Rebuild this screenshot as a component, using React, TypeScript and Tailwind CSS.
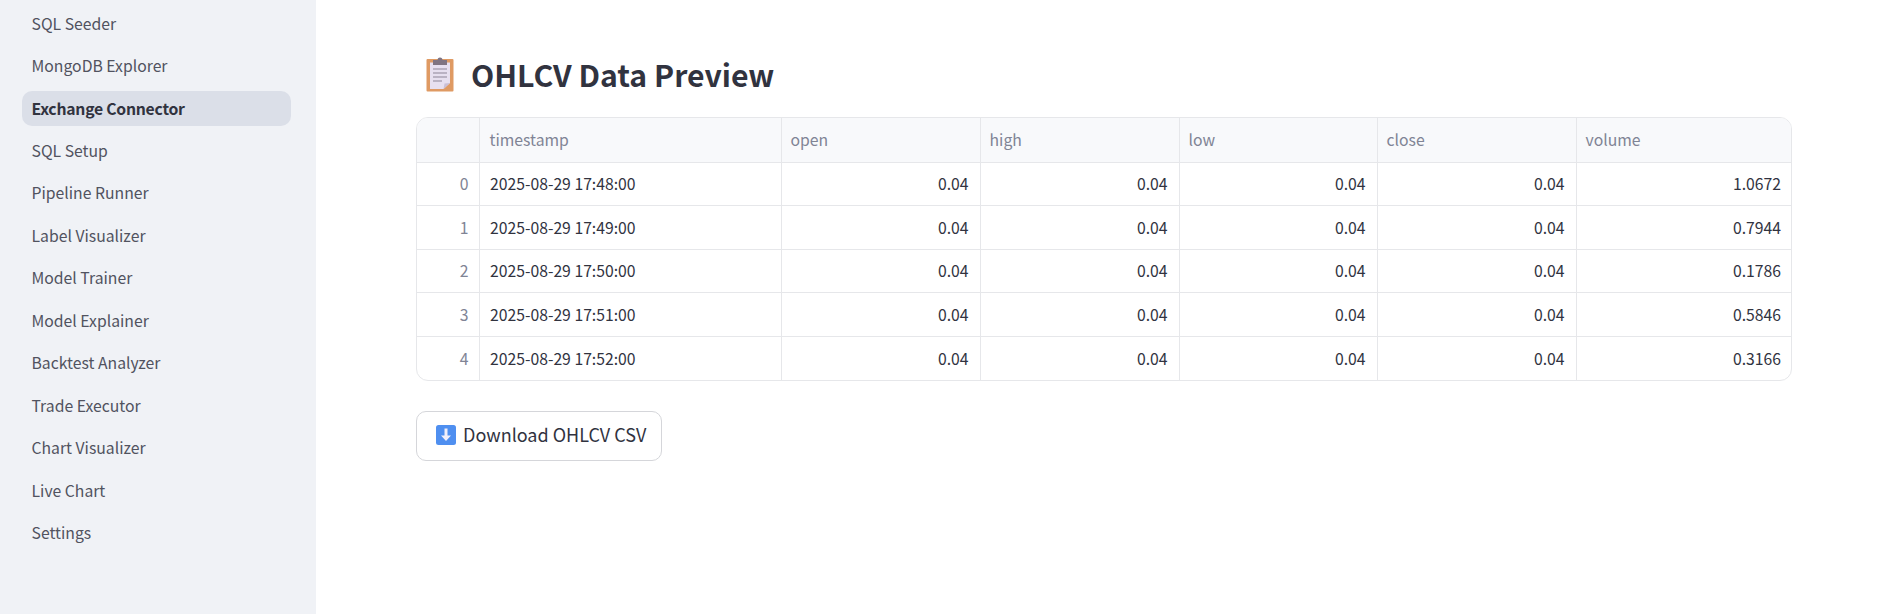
const navItems = [
  'SQL Seeder',
  'MongoDB Explorer',
  'Exchange Connector',
  'SQL Setup',
  'Pipeline Runner',
  'Label Visualizer',
  'Model Trainer',
  'Model Explainer',
  'Backtest Analyzer',
  'Trade Executor',
  'Chart Visualizer',
  'Live Chart',
  'Settings',
];

const rows = [
  { id: 0, timestamp: '2025-08-29 17:48:00', volume: '1.0672' },
  { id: 1, timestamp: '2025-08-29 17:49:00', volume: '0.7944' },
  { id: 2, timestamp: '2025-08-29 17:50:00', volume: '0.1786' },
  { id: 3, timestamp: '2025-08-29 17:51:00', volume: '0.5846' },
  { id: 4, timestamp: '2025-08-29 17:52:00', volume: '0.3166' },
];

function ClipboardIcon() {
  return (
    <svg width="28" height="36" viewBox="0 0 28 36" className="shrink-0">
      <rect x="0.5" y="3" width="27" height="32.5" rx="1" fill="#df9a63" />
      <path d="M4 6.5h20v20.5l-6.5 6H4z" fill="#e7e0f0" />
      <path d="M17.5 33l1-5.500 5.500-0.500z" fill="#c9bfd6" />
      <path d="M7 4h14v5H7z" fill="#7f7482" />
      <path d="M11.500 4a2.500 2.500 0 0 1 5 0z" fill="#7f7482" />
      <path d="M7 13h14M7 17h14M7 21h14M7 25h9" stroke="#8d8597" strokeWidth="1" fill="none" />
    </svg>
  );
}

function DownloadIcon() {
  return (
    <svg width="20" height="20" viewBox="0 0 20 20" className="shrink-0">
      <rect x="0" y="0" width="20" height="20" rx="2.500" fill="#4f8ff0" />
      <path d="M8.500 3.500h3v7h3.500L10 16l-5-5.500h3.500z" fill="#f2effa" />
    </svg>
  );
}

export default function App() {
  return (
    <div
      className="flex h-screen overflow-hidden bg-white text-[#31333f]"
      style={{ fontFamily: '"Noto Sans CJK SC", "Noto Sans", sans-serif' }}
    >
      <aside className="w-[316px] shrink-0 bg-[#f0f2f6] pl-[22px] pr-[25px] pt-[6px]">
        <nav className="flex flex-col gap-[7.450px]">
          {navItems.map((item) => (
            <div
              key={item}
              className={`flex h-[35px] items-center rounded-[10px] px-[9.500px] text-[15.750px] ${
                item === 'Exchange Connector'
                  ? 'bg-[#dbdfe8] font-semibold tracking-[-0.25px] text-[#31333f]'
                  : 'text-[#51535f]'
              }`}
            >
              {item}
            </div>
          ))}
        </nav>
      </aside>

      <main className="min-w-0 flex-1 pl-[100px] pr-[91px] pt-[50px]">
        <h1 className="flex h-[48px] items-center gap-[17px] pl-[10px] text-[30.200px] leading-none font-semibold">
          <ClipboardIcon />
          OHLCV Data Preview
        </h1>

        <div className="mt-[19px] overflow-hidden rounded-[12px] border border-[#e6e7ea]">
          <table className="w-full table-fixed border-collapse text-[15.750px]">
            <colgroup>
              <col className="w-[62px]" />
              <col className="w-[302px]" />
              <col className="w-[199px]" />
              <col className="w-[199px]" />
              <col className="w-[198px]" />
              <col className="w-[199px]" />
              <col />
            </colgroup>
            <thead>
              <tr className="h-[44px] bg-[#f8f9fb] text-left text-[#808495]">
                <th className="border-r border-b border-[#e6e7ea]"></th>
                {['timestamp', 'open', 'high', 'low', 'close', 'volume'].map((col) => (
                  <th
                    key={col}
                    className={`border-r border-b border-[#e6e7ea] font-normal last:border-r-0 ${
                      col === 'timestamp' ? 'px-[10px]' : 'px-[9px]'
                    }`}
                  >
                    {col}
                  </th>
                ))}
              </tr>
            </thead>
            <tbody>
              {rows.map((row) => (
                <tr key={row.id} className="h-[43.600px] border-b border-[#e6e7ea] last:border-b-0">
                  <td className="border-r border-[#e6e7ea] px-[10px] text-right text-[#808495]">{row.id}</td>
                  <td className="border-r border-[#e6e7ea] px-[10.500px]">{row.timestamp}</td>
                  <td className="border-r border-[#e6e7ea] px-[11px] text-right">0.04</td>
                  <td className="border-r border-[#e6e7ea] px-[11px] text-right">0.04</td>
                  <td className="border-r border-[#e6e7ea] px-[11px] text-right">0.04</td>
                  <td className="border-r border-[#e6e7ea] px-[11px] text-right">0.04</td>
                  <td className="px-[10px] text-right">{row.volume}</td>
                </tr>
              ))}
            </tbody>
          </table>
        </div>

        <button className="mt-[30px] flex h-[50px] items-center gap-[7px] rounded-[10px] border border-[#d5d6da] bg-white pb-[2px] pl-[19px] pr-[15px] text-[18px]">
          <DownloadIcon />
          Download OHLCV CSV
        </button>
      </main>
    </div>
  );
}
